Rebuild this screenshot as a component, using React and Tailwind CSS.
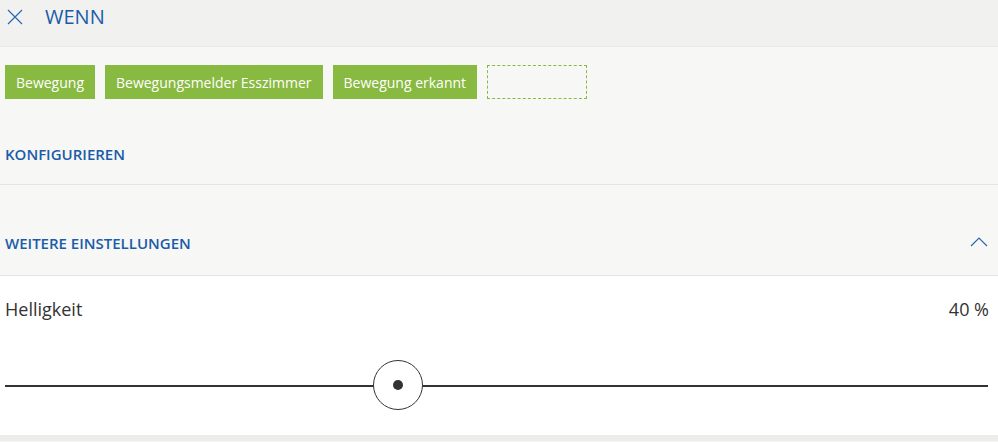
import { useState } from "react";

const chips = ["Bewegung", "Bewegungsmelder Esszimmer", "Bewegung erkannt"];

export default function App() {
  const [value] = useState(40);

  return (
    <div className="w-[998px] h-[442px] overflow-hidden bg-[#f7f7f6] font-['Open_Sans',sans-serif]">
      <div className="h-[47px] bg-[#f1f1f0] border-b border-[#e9e9e7] flex items-start pt-[5px]">
        <button className="w-[16px] h-[24px] ml-[7px] flex items-center justify-center text-[#2a68b3]">
          <svg width="16" height="16" viewBox="0 0 16 16" fill="none" stroke="currentColor" strokeWidth="1.2">
            <path d="M1 1 L15 15 M15 1 L1 15" />
          </svg>
        </button>
        <h1 className="ml-[22px] text-[20px] leading-[24px] text-[#1a5ca8]">WENN</h1>
      </div>

      <div className="flex gap-[10px] px-[5px] pt-[18px] pb-[26px]">
        {chips.map((c) => (
          <div
            key={c}
            className="h-[34px] px-[11px] flex items-center bg-[#88b940] text-white text-[14px]"
          >
            {c}
          </div>
        ))}
        <div className="h-[34px] w-[100px] border border-dashed border-[#88b940]" />
      </div>

      <div className="h-[60px] flex items-center px-[5px] border-b border-[#e4e4e2]">
        <span className="text-[15px] font-semibold text-[#1a5ca8]">KONFIGURIEREN</span>
      </div>

      <div className="h-[91px] flex items-end justify-between pl-[5px] pr-[10px] pb-[22px] border-b border-[#e4e4e2]">
        <span className="text-[15px] leading-[20px] font-semibold text-[#1a5ca8]">WEITERE EINSTELLUNGEN</span>
        <svg width="18" height="20" viewBox="0 0 18 20" fill="none" stroke="#2a68b3" strokeWidth="1.2">
          <path d="M1 13 L9 5 L17 13" />
        </svg>
      </div>

      <div className="bg-white h-[165px] flex flex-col px-[5px] border-b-[6px] border-[#ededeb]">
        <div className="flex justify-between pt-[21px] pr-[4px] text-[18px] leading-[24px] text-[#333]">
          <span>Helligkeit</span>
          <span>{value} %</span>
        </div>
        <div className="relative mt-[64px] h-[2px] w-[983px] bg-[#333]">
          <div
            className="absolute top-[-25px] w-[50px] h-[50px] -ml-[25px] rounded-full border border-[#333] bg-white flex items-center justify-center"
            style={{ left: `${value}%` }}
          >
            <div className="w-[10px] h-[10px] rounded-full bg-[#333]" />
          </div>
        </div>
      </div>
    </div>
  );
}
